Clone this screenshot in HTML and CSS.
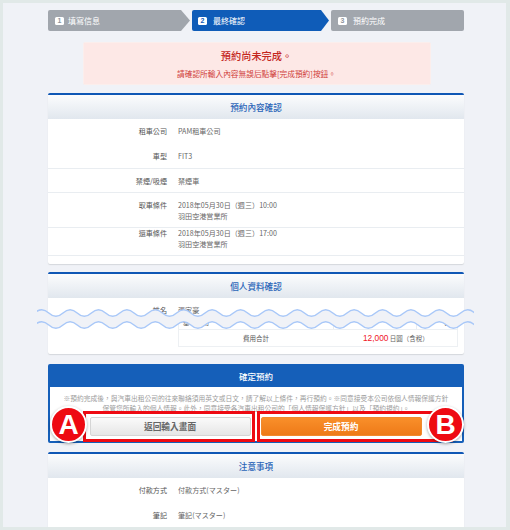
FILE: index.html
```html
<!DOCTYPE html>
<html lang="zh-Hant">
<head>
<meta charset="utf-8">
<title>最終確認</title>
<link rel="stylesheet" href="styles.css">
</head>
<body>
<div class="frame">
  <ol class="steps">
    <li class="step step-first"><span class="num">1</span>填寫信息</li>
    <li class="step step-active"><span class="num">2</span>最終確認</li>
    <li class="step step-last"><span class="num">3</span>預約完成</li>
  </ol>

  <div class="alert">
    <p class="alert-title">預約尚未完成。</p>
    <p class="alert-sub">請確認所輸入內容無誤后點擊[完成預約]按鈕。</p>
  </div>

  <section class="card card-booking">
    <h2 class="card-head">預約內容確認</h2>
    <dl class="rows">
      <div class="row"><dt>租車公司</dt><dd>PAM租車公司</dd></div>
      <div class="row row-line"><dt>車型</dt><dd>FIT3</dd></div>
      <div class="row row-line row-short"><dt>禁煙/吸煙</dt><dd>禁煙車</dd></div>
      <div class="row row-line row-tall"><dt>取車條件</dt><dd>2018年05月30日（週三）10:00<br>羽田空港営業所</dd></div>
      <div class="row row-line row-flush"><dt>還車條件</dt><dd>2018年05月30日（週三）17:00<br>羽田空港営業所</dd></div>
    </dl>
  </section>

  <section class="card card-personal">
    <h2 class="card-head">個人資料確認</h2>
    <dl class="rows">
      <div class="row row-name"><dt>姓名</dt><dd>張家豪</dd></div>
    </dl>
    <div class="fee">
      <div class="fee-row">
        <span class="fee-a">基本費用</span><span class="fee-b"></span><span class="fee-c">日圓</span>
      </div>
      <div class="fee-total">
        <span class="fee-label">費用合計</span>
        <span class="fee-value"><strong>12,000</strong> 日圓（含稅）</span>
      </div>
    </div>
  </section>

  <section class="confirm">
    <h2 class="confirm-head">確定預約</h2>
    <div class="confirm-body">
      <p class="notice">※預約完成後，與汽車出租公司的往來聯絡須用英文或日文，請了解以上條件，再行預約。※同意接受本公司依個人情報保護方針<br>保管您所輸入的個人情報。此外，同意接受各汽車出租公司的「個人情報保護方針」以及「預約規約」。</p>
      <div class="actions">
        <button class="btn btn-back" type="button">返回輸入畫面</button>
        <button class="btn btn-done" type="button">完成預約</button>
      </div>
    </div>
    <span class="mark mark-a"></span>
    <span class="mark mark-b"></span>
    <span class="pin pin-a">A</span>
    <span class="pin pin-b">B</span>
  </section>

  <section class="card card-notes">
    <h2 class="card-head">注意事項</h2>
    <dl class="rows">
      <div class="row"><dt>付款方式</dt><dd>付款方式(マスター)</dd></div>
      <div class="row"><dt>筆記</dt><dd>筆記(マスター)</dd></div>
      <div class="row"><dt>&nbsp;</dt><dd>&nbsp;</dd></div>
    </dl>
  </section>

  <svg class="tear" viewBox="0 0 437 30" width="437" height="30" aria-hidden="true">
    <path class="tear-band" d="M-2.4 8q7.1 -6.6 14.2 0t14.2 0t14.2 0t14.2 0t14.2 0t14.2 0t14.2 0t14.2 0t14.2 0t14.2 0t14.2 0t14.2 0t14.2 0t14.2 0t14.2 0t14.2 0t14.2 0t14.2 0t14.2 0t14.2 0t14.2 0t14.2 0t14.2 0t14.2 0t14.2 0t14.2 0t14.2 0t14.2 0t14.2 0t14.2 0t14.2 0t14.2 0V20q-7.1 6.6 -14.2 0t-14.2 0t-14.2 0t-14.2 0t-14.2 0t-14.2 0t-14.2 0t-14.2 0t-14.2 0t-14.2 0t-14.2 0t-14.2 0t-14.2 0t-14.2 0t-14.2 0t-14.2 0t-14.2 0t-14.2 0t-14.2 0t-14.2 0t-14.2 0t-14.2 0t-14.2 0t-14.2 0t-14.2 0t-14.2 0t-14.2 0t-14.2 0t-14.2 0t-14.2 0t-14.2 0t-14.2 0Z"/>
    <path class="tear-line" d="M-2.4 8q7.1 -6.6 14.2 0t14.2 0t14.2 0t14.2 0t14.2 0t14.2 0t14.2 0t14.2 0t14.2 0t14.2 0t14.2 0t14.2 0t14.2 0t14.2 0t14.2 0t14.2 0t14.2 0t14.2 0t14.2 0t14.2 0t14.2 0t14.2 0t14.2 0t14.2 0t14.2 0t14.2 0t14.2 0t14.2 0t14.2 0t14.2 0t14.2 0t14.2 0"/>
    <path class="tear-line" d="M-2.4 20q7.1 -6.6 14.2 0t14.2 0t14.2 0t14.2 0t14.2 0t14.2 0t14.2 0t14.2 0t14.2 0t14.2 0t14.2 0t14.2 0t14.2 0t14.2 0t14.2 0t14.2 0t14.2 0t14.2 0t14.2 0t14.2 0t14.2 0t14.2 0t14.2 0t14.2 0t14.2 0t14.2 0t14.2 0t14.2 0t14.2 0t14.2 0t14.2 0t14.2 0"/>
  </svg>
</div>
</body>
</html>
```

FILE: styles.css
```css
* { box-sizing: border-box; }
html, body { margin: 0; padding: 0; height: 100%; }
body {
  background: #e1e9e8;
  font-family: "Noto Sans CJK TC", "Noto Sans", sans-serif;
  color: #555;
  overflow: hidden;
}
p, h2, dl, dt, dd, ol { margin: 0; padding: 0; }

.frame {
  position: relative;
  margin: 3px 4px 3px 3px;
  width: 503px;
  height: 524px;
  padding: 7px 42px 0 45px;
  background: #f0f2f7;
  overflow: hidden;
}

/* Steps */
.steps { display: flex; gap: 2px; list-style: none; height: 21px; }
.step {
  display: flex;
  align-items: center;
  gap: 4px;
  padding-left: 7px;
  background: #a1a6ad;
  color: #fff;
  font-size: 8px;
  border-radius: 2px;
}
.step-first { width: 142px; clip-path: polygon(0 0, 133px 0, 100% 50%, 133px 100%, 0 100%); }
.step-active { width: 137px; padding-left: 6px; gap: 6px; background: #0f5cb8; clip-path: polygon(0 0, 129px 0, 100% 50%, 129px 100%, 0 100%); }
.step-last { width: 133px; gap: 6px; }
.num {
  width: 9px;
  height: 8px;
  border-radius: 1.5px;
  background: #fff;
  color: #8f959c;
  font: 700 7px/8px "Liberation Sans", sans-serif;
  text-align: center;
}
.step-active .num { color: #0f5cb8; }

/* Alert */
.alert {
  width: 348px;
  height: 43px;
  margin: 11px 0 0 34.5px;
  padding-top: 5px;
  background: #fde8e6;
  border: 1px solid #fbeeec;
  border-radius: 2px;
  text-align: center;
}
.alert-title { font-size: 10.2px; line-height: 15px; font-weight: 500; color: #c4261d; }
.alert-sub { margin-top: 5px; font-size: 7.7px; line-height: 11px; color: #d0403a; }

/* Cards */
.card {
  margin-top: 8px;
  background: #fff;
  border-top: 2px solid #0f57b5;
  border-radius: 2px;
  box-shadow: 0 1px 1px #d4d7dc;
}
.card-head {
  height: 24px;
  background: linear-gradient(#fbfcfd, #e1e7ee);
  color: #2b65b8;
  font-size: 8.6px;
  font-weight: 500;
  line-height: 24px;
  text-align: center;
}
.card-booking { height: 171px; }
.card-personal { height: 82px; }
.card-notes { margin-top: 9px; }
.row {
  display: grid;
  grid-template-columns: 119px 1fr;
  column-gap: 11px;
  height: 25px;
  padding-top: 7px;
  font-size: 7.1px;
  line-height: 11px;
}
.row dt { text-align: right; color: #555; }
.row dd { color: #666; }
.row-line { border-bottom: 1px solid #e9edf1; }
.row-short { height: 24px; }
.row-tall { height: 35px; }
.row-flush { height: 28px; padding-top: 0; }
.row-name { height: 21px; }

.fee { width: 280px; margin-left: 130px; font-size: 6.5px; line-height: 11px; }
.fee-row { display: grid; grid-template-columns: 154px 84px 42px; height: 10px; line-height: 5px; border: 1px solid #edf0f3; border-bottom: 0; }
.fee-a { padding-left: 4px; }
.fee-b { border-left: 1px solid #e9edf1; border-right: 1px solid #e9edf1; }
.fee-c { text-align: right; padding-right: 2px; }
.fee-total { display: grid; grid-template-columns: 154px 126px; align-items: center; height: 18px; border: 1px solid #edf0f3; }
.fee-label { text-align: center; color: #555; }
.fee-value { padding-left: 30px; color: #666; white-space: nowrap; }
.fee-value strong { color: #f0141e; font: 400 8.3px/11px "Liberation Sans", sans-serif; }

/* Confirm block */
.confirm {
  position: relative;
  height: 79px;
  margin-top: 10px;
  padding: 0 2px 2px;
  background: #155fb9;
  border-radius: 2px;
}
.confirm-head {
  height: 23px;
  padding-top: 2px;
  color: #fff;
  font-size: 8.5px;
  font-weight: 500;
  line-height: 21px;
  text-align: center;
}
.confirm-body { height: 54px; padding-top: 6px; background: #fff; }
.notice { font-size: 6.76px; line-height: 10px; color: #9c9c9c; text-align: center; white-space: nowrap; }
.actions { display: flex; justify-content: center; gap: 10px; margin-top: 4px; padding-right: 1px; }
.btn {
  width: 161px;
  height: 19px;
  padding: 0;
  border-radius: 2px;
  font-family: inherit;
  font-size: 8.7px;
  font-weight: 700;
  line-height: 17px;
}
.btn-back { background: linear-gradient(#fafafa, #e6e6e6); border: 1px solid #d5d5d5; color: #666; }
.btn-done { background: linear-gradient(#f98f2a, #ee7a18); border: 1px solid #f08a2d; color: #fff; }

.mark { position: absolute; top: 47px; height: 31px; border: 3px solid #ee0a12; }
.mark-a { left: 35px; width: 172px; }
.mark-b { left: 209px; width: 196px; }
.pin {
  position: absolute;
  top: 42px;
  width: 37px;
  height: 37px;
  border: 2px solid #fff;
  border-radius: 50%;
  background: #ee0a12;
  box-shadow: 0 1px 3px rgba(0, 0, 0, 0.35);
  color: #fff;
  font: 700 28px/33px "Liberation Sans", sans-serif;
  text-align: center;
}
.pin-a { left: 2px; }
.pin-b { left: 379px; }

/* Torn paper overlay */
.tear { position: absolute; left: 34px; top: 302px; overflow: hidden; }
.tear-band { fill: #f0f2f7; }
.tear-line { fill: none; stroke: #a9c8f8; stroke-width: 1.4; }
```
